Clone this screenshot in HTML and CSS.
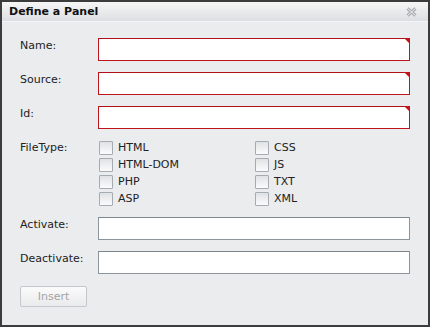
FILE: index.html
```html
<!DOCTYPE html>
<html lang="en">
<head>
  <meta charset="UTF-8">
  <title>Define a Panel</title>
  <link rel="stylesheet" href="styles.css">
</head>
<body>
  <div class="dialog">
    <div class="titlebar">
      <span class="title">Define a Panel</span>
      <svg class="close" width="11" height="10" viewBox="0 0 11 10">
        <path d="M1.5 1.5 L9.5 8.5 M9.5 1.5 L1.5 8.5" stroke="#a9acae" stroke-width="3" fill="none"/>
        <path d="M1.5 1.5 L9.5 8.5 M9.5 1.5 L1.5 8.5" stroke="#eef0f1" stroke-width="1" fill="none"/>
      </svg>
    </div>

    <form class="form">
      <label class="label">Name:</label>
      <div class="field invalid"><input type="text"></div>

      <label class="label">Source:</label>
      <div class="field invalid"><input type="text"></div>

      <label class="label">Id:</label>
      <div class="field invalid"><input type="text"></div>

      <label class="label types-label">FileType:</label>
      <div class="types">
        <div class="check"><span class="box"></span>HTML</div>
        <div class="check"><span class="box"></span>CSS</div>
        <div class="check"><span class="box"></span>HTML-DOM</div>
        <div class="check"><span class="box"></span>JS</div>
        <div class="check"><span class="box"></span>PHP</div>
        <div class="check"><span class="box"></span>TXT</div>
        <div class="check"><span class="box"></span>ASP</div>
        <div class="check"><span class="box"></span>XML</div>
      </div>

      <label class="label">Activate:</label>
      <div class="field"><input type="text"></div>

      <label class="label">Deactivate:</label>
      <div class="field"><input type="text"></div>

      <div class="actions">
        <button type="button" disabled>Insert</button>
      </div>
    </form>
  </div>
</body>
</html>
```

FILE: styles.css
```css
body {
  margin: 0;
  font-family: "DejaVu Sans", Verdana, sans-serif;
  font-size: 11px;
  color: #222;
}
.dialog {
  width: 430px;
  height: 327px;
  box-sizing: border-box;
  border: 2px solid #3c3c3c;
  background: #eaecee;
}
.titlebar {
  height: 19px;
  display: flex;
  align-items: center;
  justify-content: space-between;
  padding: 0 11px 0 7px;
  background: linear-gradient(#f6f6f6, #dcdfe2);
  border-bottom: 1px solid #f4f5f6;
}
.title {
  font-weight: bold;
  font-size: 11px;
  color: #111;
}
.close {
  margin-top: 1px;
}
.form {
  display: grid;
  grid-template-columns: 78px 312px;
  row-gap: 11px;
  padding: 16px 18px 0 18px;
}
.label {
  padding-top: 1px;
  line-height: 14px;
  align-self: start;
}
.field {
  position: relative;
}
.field input {
  display: block;
  width: 100%;
  height: 23px;
  box-sizing: border-box;
  margin: 0;
  border: 1px solid #8d959c;
  border-top-color: #7d858c;
  background: #fff;
  font: inherit;
}
.field.invalid input {
  border-color: #c0141c;
  border-top-color: #b01017;
}
.field.invalid::after {
  content: "";
  position: absolute;
  top: 0;
  right: 0;
  border-style: solid;
  border-width: 0 6px 6px 0;
  border-color: transparent #c0141c transparent transparent;
}
.types-label {
  padding-top: 0;
  line-height: 17px;
  margin-top: -1px;
}
.types {
  display: grid;
  grid-template-columns: 156px 156px;
  grid-auto-rows: 17px;
  margin-top: -1px;
  margin-bottom: -1px;
}
.check {
  display: flex;
  align-items: center;
  line-height: 17px;
  margin-left: 1px;
}
.box {
  width: 12px;
  height: 12px;
  margin-right: 5px;
  border: 1px solid #a4abb2;
  border-radius: 1px;
  background: linear-gradient(#dfe2e5, #fbfbfc);
}
.actions {
  grid-column: 1 / 3;
  padding-top: 1px;
}
button {
  width: 67px;
  height: 21px;
  padding: 0;
  border: 1px solid #c4c8cc;
  border-radius: 2px;
  background: linear-gradient(#fbfbfb, #e9eaeb);
  color: #a2a4a6;
  font: inherit;
  font-size: 11px;
}
```
